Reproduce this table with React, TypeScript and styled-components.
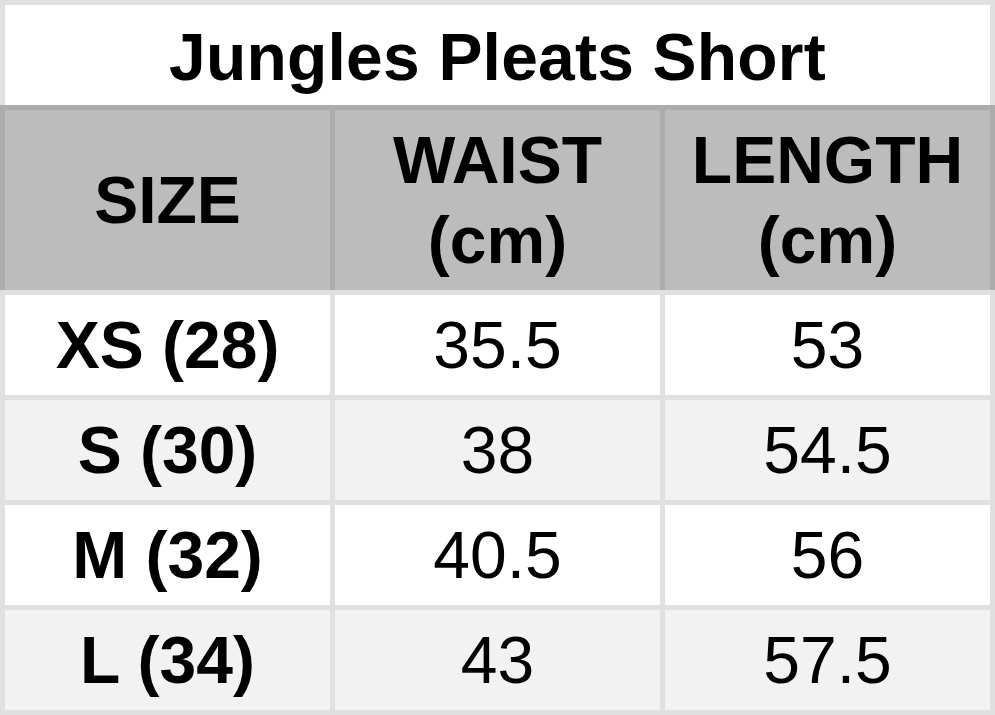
import React from 'react';
import styled, { createGlobalStyle } from 'styled-components';

const GlobalStyle = createGlobalStyle`
  html, body {
    margin: 0;
    padding: 0;
    background: #ffffff;
  }
  body {
    font-family: "Liberation Sans", Arial, sans-serif;
    color: #000;
  }
`;

const Chart = styled.div`
  width: 995px;
  background: #e0e0e0;
  padding: 5px 0;
  display: flex;
  flex-direction: column;
`;

const Title = styled.h1`
  margin: 0 5px;
  height: 100px;
  box-sizing: border-box;
  padding-top: 4px;
  background: #ffffff;
  display: flex;
  align-items: center;
  justify-content: center;
  font-size: 66px;
  font-weight: 700;
  letter-spacing: 0.2px;
`;

const Row = styled.div<{ $header?: boolean }>`
  display: grid;
  grid-template-columns: repeat(3, 1fr);
  gap: 5px;
  padding: 5px 5px 0;
  background: ${({ $header }) => ($header ? '#acacac' : '#e0e0e0')};
`;

const Cell = styled.div<{ $header?: boolean; $shade?: boolean; $bold?: boolean }>`
  height: ${({ $header }) => ($header ? '180px' : '100px')};
  background: ${({ $header, $shade }) =>
    $header ? '#bcbcbc' : $shade ? '#f2f2f2' : '#ffffff'};
  display: flex;
  align-items: center;
  justify-content: center;
  text-align: center;
  font-size: 66px;
  line-height: ${({ $header }) => ($header ? '80px' : '76px')};
  font-weight: ${({ $bold }) => ($bold ? 700 : 400)};
`;

const sizes = [
  { size: 'XS (28)', waist: '35.5', length: '53' },
  { size: 'S (30)', waist: '38', length: '54.5' },
  { size: 'M (32)', waist: '40.5', length: '56' },
  { size: 'L (34)', waist: '43', length: '57.5' },
];

const App: React.FC = () => {
  return (
    <>
      <GlobalStyle />
      <Chart>
        <Title>Jungles Pleats Short</Title>
        <Row $header>
          <Cell $header $bold>SIZE</Cell>
          <Cell $header $bold>
            WAIST
            <br />
            (cm)
          </Cell>
          <Cell $header $bold>
            LENGTH
            <br />
            (cm)
          </Cell>
        </Row>
        {sizes.map((item, index) => (
          <Row key={item.size}>
            <Cell $shade={index % 2 === 1} $bold>{item.size}</Cell>
            <Cell $shade={index % 2 === 1}>{item.waist}</Cell>
            <Cell $shade={index % 2 === 1}>{item.length}</Cell>
          </Row>
        ))}
      </Chart>
    </>
  );
};

export default App;
